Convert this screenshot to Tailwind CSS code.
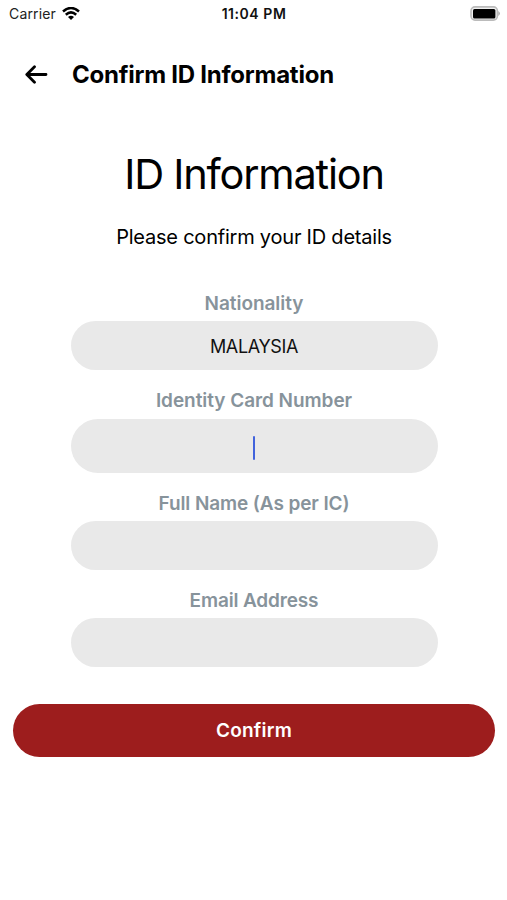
<!DOCTYPE html>
<html lang="en"><head><meta charset="utf-8"><title>Confirm ID Information</title>
<script src="https://cdn.jsdelivr.net/npm/@tailwindcss/browser@4"></script></head>
<body class="bg-white text-black font-['Inter',sans-serif] w-[507px] h-[900px] overflow-hidden">
<header class="h-[27px] grid grid-cols-3 items-center pl-[9px] pr-[7px]">
<div class="flex items-center gap-[6px] text-[14px] text-[#222]"><span class="w-[47px] whitespace-nowrap tracking-[0.15px]">Carrier</span>
<svg class="w-[18px] h-[14px]" viewBox="0 0 18 14" fill="none" stroke="#000" stroke-width="2.5"><path d="M1 4.5Q9-2.5 17 4.5M3.8 7.7Q9 3.1 14.2 7.7"/><path d="M9 13L6 10.1Q9 7.5 12 10.1Z" fill="#000" stroke="none"/></svg></div>
<div class="text-center text-[14px] font-semibold whitespace-nowrap tracking-[0.55px] text-[#111] -ml-[1px]">11:04 PM</div>
<svg class="justify-self-end w-[30px] h-[15px]" viewBox="0 0 30 15"><rect x="1" y=".9" width="26.4" height="13.2" rx="4" fill="#f0f0f0" stroke="#bbb" stroke-width="1.6"/><rect x="3" y="3" width="22.4" height="9.4" rx="1.5"/><path d="M28.3 5Q31.5 7.5 28.3 10Z" fill="#aaa"/></svg>
</header>
<nav class="h-[95px] flex items-center pl-[24px] gap-[24px]">
<svg class="w-[24px] h-[20px]" viewBox="0 0 24 20" fill="none" stroke="#000" stroke-width="2.8" stroke-linecap="round" stroke-linejoin="round"><path d="M22 9.5H3M10.5 1.8L2.8 9.5L10.5 17.2"/></svg>
<div class="text-[24px] font-bold whitespace-nowrap tracking-[-0.24px]">Confirm ID Information</div></nav>
<main class="pl-[13px] pr-[12px] flex flex-col items-center text-center">
<h1 class="mt-[24px] h-[56px] leading-[57px] text-[41.5px] tracking-[-1.2px]">ID Information</h1>
<p class="mt-[20px] h-[30px] leading-[30px] text-[20px] tracking-[-0.22px]">Please confirm your ID details</p>
<form class="mt-[37px] w-[367px] flex flex-col text-[19px]">
<label class="h-[32px] leading-[30px] font-semibold tracking-[-0.05px] text-[#87939b]">Nationality</label>
<div class="h-[49px] leading-[51px] rounded-full bg-[#e9e9e9] text-[18px] tracking-[-0.35px] text-[#111]">MALAYSIA</div>
<label class="mt-[16px] h-[32.5px] leading-[30px] font-semibold tracking-[-0.05px] text-[#87939b]">Identity Card Number</label>
<div class="h-[54.5px] rounded-[27px] bg-[#e9e9e9] flex items-center justify-center pt-[4px]"><span class="w-[2.5px] h-[24px] rounded-full bg-[#4263dc]"></span></div>
<label class="mt-[16px] h-[32px] leading-[30px] font-semibold tracking-[-0.1px] text-[#87939b]">Full Name (As per IC)</label>
<div class="h-[49px] rounded-full bg-[#e9e9e9]"></div>
<label class="mt-[16px] h-[32px] leading-[30px] font-semibold tracking-[-0.15px] text-[#87939b]">Email Address</label>
<div class="h-[49px] rounded-full bg-[#e9e9e9]"></div>
</form>
<button class="mt-[36.5px] w-full h-[53px] pt-[2px] rounded-full bg-[#9d1d1d] text-white text-[19px] font-semibold tracking-[0.2px]">Confirm</button>
</main></body></html>
